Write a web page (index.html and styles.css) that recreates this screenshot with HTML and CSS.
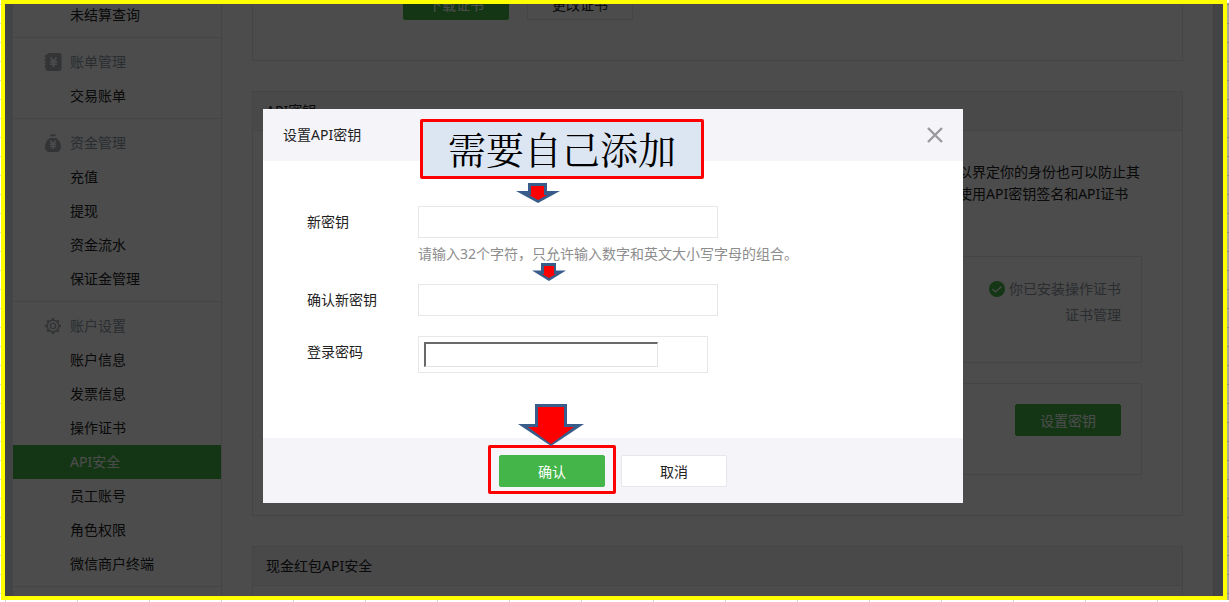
FILE: index.html
```html
<!DOCTYPE html>
<html lang="zh-CN">
<head>
  <meta charset="UTF-8">
  <meta name="viewport" content="width=device-width, initial-scale=1.0">
  <title>API安全</title>
  <link rel="stylesheet" href="styles.css">
</head>
<body>
  <div class="frame">
    <div class="page">
      <nav class="sidebar">
        <div class="menu-group">
          <a href="#">未结算查询</a>
        </div>
        <div class="menu-group">
          <h3>
            <svg class="menu-icon" viewBox="0 0 18 18">
              <path fill="#a8b0b4" d="M4 0h11a2.500 2.500 0 0 1 2.500 2.500v13a2.500 2.500 0 0 1-2.500 2.500h-11a2.500 2.500 0 0 1-2.500-2.500v-1h-1v-1.500h1v-2h-1v-1.500h1v-2h-1v-1.500h1v-2h-1v-1.500h1a2.500 2.500 0 0 1 2.500-1.500z"/>
              <path fill="none" stroke="#fff" stroke-width="1.600" d="M6.500 4.500l3 4 3-4M9.500 8v6M6 8.800h7M6 11.300h7"/>
            </svg>
            账单管理
          </h3>
          <a href="#">交易账单</a>
        </div>
        <div class="menu-group">
          <h3>
            <svg class="menu-icon" viewBox="0 0 18 18">
              <path fill="#a8b0b4" d="M6 0l1.500 .7 1.500-.7 1.500 .7 1.500-.7-.7 2.300h-4.600zM6 4h6c3 1.500 5 5 5 8.500 0 3.500-2 5.500-4.500 5.500h-7c-2.500 0-4.500-2-4.500-5.500C1 9 3 5.500 6 4z"/>
              <path fill="none" stroke="#fff" stroke-width="1.500" d="M6.300 6.500l2.700 3.500 2.700-3.500M9 10v5M6 10.300h6M6 12.500h6"/>
            </svg>
            资金管理
          </h3>
          <a href="#">充值</a>
          <a href="#">提现</a>
          <a href="#">资金流水</a>
          <a href="#">保证金管理</a>
        </div>
        <div class="menu-group">
          <h3>
            <svg class="menu-icon" viewBox="0 0 18 18">
              <g fill="none" stroke="#a8b0b4">
                <circle cx="9" cy="9" r="5.800" stroke-width="1.500"/>
                <circle cx="9" cy="9" r="2.600" stroke-width="1.400"/>
                <path stroke-width="2.600" d="M9 1v2M9 15v2M1 9h2M15 9h2M3.300 3.300l1.400 1.400M13.300 13.300l1.400 1.400M3.300 14.700l1.400-1.400M13.300 4.700l1.400-1.400"/>
              </g>
            </svg>
            账户设置
          </h3>
          <a href="#">账户信息</a>
          <a href="#">发票信息</a>
          <a href="#">操作证书</a>
          <a href="#" class="active">API安全</a>
          <a href="#">员工账号</a>
          <a href="#">角色权限</a>
          <a href="#">微信商户终端</a>
        </div>
        <div class="menu-group"></div>
      </nav>

      <main class="main">
        <section class="panel cert-panel">
          <button type="button" class="btn btn-primary">下载证书</button>
          <button type="button" class="btn btn-default">更改证书</button>
        </section>

        <section class="panel">
          <h2>API密钥</h2>
          <div class="panel-body">
            <p class="intro">以界定你的身份也可以防止其<br>使用API密钥签名和API证书</p>
            <div class="box box-status">
              <p>
                <svg class="ok-icon" viewBox="0 0 16 16">
                  <circle cx="8" cy="8" r="8" fill="#44b549"/>
                  <path fill="none" stroke="#fff" stroke-width="1.200" d="M3.500 8l3 3 6-5.500"/>
                </svg>
                你已安装操作证书
              </p>
              <a href="#">证书管理</a>
            </div>
            <div class="box box-key">
              <button type="button" class="btn btn-primary">设置密钥</button>
            </div>
          </div>
        </section>

        <section class="panel">
          <h2>现金红包API安全</h2>
          <div class="panel-body"></div>
        </section>
      </main>
    </div>

    <div class="mask">
      <form class="dialog" role="dialog" aria-labelledby="dialog-title">
        <div class="dialog-header">
          <span id="dialog-title">设置API密钥</span>
          <button type="button" class="close" aria-label="关闭">
            <svg viewBox="0 0 16 16"><path fill="none" stroke="#9a9a9c" stroke-width="2.400" d="M1 1l14 14M15 1L1 15"/></svg>
          </button>
        </div>

        <div class="dialog-body">
          <div class="row">
            <label for="new-key">新密钥</label>
            <div class="field">
              <input type="text" id="new-key" class="text-input">
              <p class="hint">请输入32个字符，只允许输入数字和英文大小写字母的组合。</p>
            </div>
          </div>
          <div class="row">
            <label for="confirm-key">确认新密钥</label>
            <div class="field">
              <input type="text" id="confirm-key" class="text-input">
            </div>
          </div>
          <div class="row">
            <label for="password">登录密码</label>
            <div class="field password-wrap">
              <input type="password" id="password" class="password-input">
            </div>
          </div>
        </div>

        <div class="dialog-footer">
          <div class="confirm-wrap">
            <button type="submit" class="btn btn-primary">确认</button>
          </div>
          <button type="button" class="btn btn-default">取消</button>
        </div>

        <div class="callout">需要自己添加</div>
        <svg class="arrow arrow-new" viewBox="0 0 44 20">
          <path fill="#385d8a" d="M12 0h19v8h13L22 20 0 8h12z"/>
          <path fill="#f00" d="M15 3h13v9h3l-9 5-9-5h2z"/>
        </svg>
        <svg class="arrow arrow-confirm" viewBox="0 0 34 18">
          <path fill="#385d8a" d="M9 0h15v7.500h10L17 18 0 7.500h9z"/>
          <path fill="#f00" d="M12 3h10v8h2l-7 4-7-4h2z"/>
        </svg>
        <svg class="arrow arrow-submit" viewBox="0 0 66 42">
          <path fill="#385d8a" d="M17 0h32v20h17L33 42 0 20h17z"/>
          <path fill="#f00" d="M20 3h26v20h10L33 40 10 23h10z"/>
        </svg>
      </form>
    </div>
  </div>
</body>
</html>
```

FILE: styles.css
```css
* {
  box-sizing: border-box;
}

body {
  margin: 0;
  overflow: hidden;
  font-family: "Noto Sans", "Noto Sans CJK SC", sans-serif;
  font-size: 14px;
  line-height: 22px;
  color: #222;
  background-color: #fff;
  background-image:
    linear-gradient(#d0d3d8 1px, transparent 1px),
    linear-gradient(90deg, #d0d3d8 1px, transparent 1px);
  background-size: 72px 19px;
  background-position: 5px 4px;
}

h2, h3, p {
  margin: 0;
  font-size: 14px;
  font-weight: normal;
}

a {
  color: inherit;
  text-decoration: none;
}

button, input {
  font-family: inherit;
  font-size: 14px;
}

.frame {
  position: relative;
  height: calc(100vh - 2px);
  margin: 0 2px 0 1px;
  border: 4px solid #ff0;
  background: #e1e3e7;
  box-shadow: 3px 3px 1px rgba(0, 0, 0, 0.35);
  overflow: hidden;
}

.page {
  display: flex;
  margin: -16px 10px 0 7px;
  background: #fff;
  box-shadow: 1px 0 0 #d4d6da;
}

/* sidebar */
.sidebar {
  width: 210px;
  padding-top: 10px;
  border-left: 1px solid #e7e7eb;
  border-right: 1px solid #e7e7eb;
}

.menu-group {
  padding: 7px 0 5px;
  border-top: 1px solid #e7e7eb;
}

.menu-group:first-child {
  padding-top: 0;
  border-top: none;
}

.menu-group h3 {
  display: flex;
  align-items: center;
  gap: 8px;
  height: 34px;
  padding-left: 31px;
  color: #8d99a5;
}

.menu-group a {
  display: block;
  padding-left: 57px;
  line-height: 34px;
}

.menu-group a.active {
  color: #fff;
  background: #44b549;
}

.menu-icon {
  width: 18px;
  height: 18px;
}

/* content */
.main {
  flex: 1;
  padding: 0 30px;
}

.panel {
  margin-bottom: 30px;
  border: 1px solid #e7e7eb;
}

.panel h2 {
  padding: 8px 13px;
  border-bottom: 1px solid #e7e7eb;
  background: #f4f4f9;
}

.panel-body {
  padding: 30px 40px 40px;
}

.cert-panel {
  display: flex;
  gap: 18px;
  padding: 0 150px 40px;
  border-top: none;
}

.intro {
  width: 184px;
  margin: 0 0 51px auto;
  white-space: nowrap;
}

.box {
  padding: 19px 20px 34px;
  border: 1px solid #e7e7eb;
  color: #8d99a5;
  line-height: 26px;
  text-align: right;
}

.box p {
  display: flex;
  align-items: center;
  justify-content: flex-end;
  gap: 4px;
}

.box-key {
  display: flex;
  justify-content: flex-end;
  margin-top: 20px;
  padding: 20px 20px 38px;
}

.ok-icon {
  width: 16px;
  height: 16px;
}

.btn {
  width: 106px;
  height: 32px;
  padding: 0;
  border: 1px solid #e7e7eb;
  border-radius: 2px;
  color: #222;
  background: #fff;
  cursor: pointer;
}

.btn-primary {
  border-color: #44b549;
  color: #fff;
  background: #44b549;
}

/* dialog */
.mask {
  position: absolute;
  inset: 0;
  display: flex;
  align-items: center;
  justify-content: center;
  padding: 12px 2px 0 0;
  background: rgba(0, 0, 0, 0.7);
}

.dialog {
  position: relative;
  width: 700px;
  background: #fff;
}

.dialog-header {
  display: flex;
  align-items: center;
  justify-content: space-between;
  height: 52px;
  padding: 0 20px;
  background: #f4f4f9;
}

.close {
  width: 16px;
  height: 16px;
  padding: 0;
  border: none;
  background: none;
  cursor: pointer;
}

.close svg {
  display: block;
}

.dialog-body {
  display: flex;
  flex-direction: column;
  gap: 20px;
  padding: 45px 44px 65px;
}

.row {
  display: flex;
}

.row label {
  width: 111px;
  line-height: 32px;
}

.text-input {
  display: block;
  width: 300px;
  height: 32px;
  padding: 0 8px;
  border: 1px solid #e7e7eb;
}

.hint {
  height: 26px;
  padding-top: 5px;
  color: #8d8d8d;
}

.password-wrap {
  width: 290px;
  padding: 5px;
  border: 1px solid #e7e7eb;
}

.password-input {
  display: block;
  width: 234px;
  height: 25px;
  border: 1px solid #e3e3e3;
  border-top: 2px solid #696969;
  border-left: 2px solid #696969;
}

.dialog-footer {
  display: flex;
  justify-content: center;
  gap: 16px;
  padding: 17px 0 16px;
  background: #f4f4f9;
}

/* marks drawn over the dialog */
.confirm-wrap {
  position: relative;
}

.confirm-wrap::after {
  content: "";
  position: absolute;
  inset: -10px -11px -7px;
  border: 3px solid #f00;
  border-radius: 2px;
  pointer-events: none;
}

.callout {
  position: absolute;
  top: 10px;
  left: 157px;
  width: 284px;
  height: 60px;
  border: 3px solid #f00;
  border-radius: 2px;
  background: #dce6f2;
  color: #000;
  font-family: "SimSun", "Noto Serif CJK SC", "Noto Sans CJK SC", serif;
  font-size: 38px;
  line-height: 52px;
  text-align: center;
}

.arrow {
  position: absolute;
}

.arrow-new {
  top: 74px;
  left: 253px;
  width: 44px;
  height: 20px;
}

.arrow-confirm {
  top: 154px;
  left: 269px;
  width: 34px;
  height: 18px;
}

.arrow-submit {
  top: 295px;
  left: 255px;
  width: 66px;
  height: 42px;
}
```
